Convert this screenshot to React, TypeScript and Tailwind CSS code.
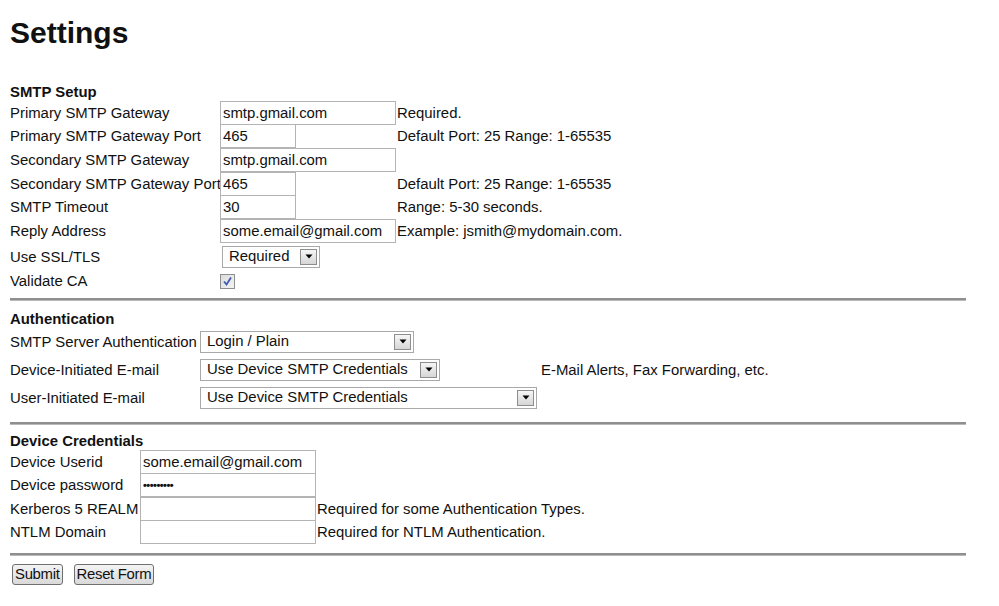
import React from "react";

const smtpRows = [
  { label: "Primary SMTP Gateway", value: "smtp.gmail.com", wide: true, hint: "Required." },
  { label: "Primary SMTP Gateway Port", value: "465", wide: false, hint: "Default Port: 25 Range: 1-65535" },
  { label: "Secondary SMTP Gateway", value: "smtp.gmail.com", wide: true, hint: "" },
  { label: "Secondary SMTP Gateway Port", value: "465", wide: false, hint: "Default Port: 25 Range: 1-65535" },
  { label: "SMTP Timeout", value: "30", wide: false, hint: "Range: 5-30 seconds." },
  { label: "Reply Address", value: "some.email@gmail.com", wide: true, hint: "Example: jsmith@mydomain.com." },
];

const credRows = [
  { label: "Device Userid", value: "some.email@gmail.com", hint: "" },
  { label: "Device password", value: "•••••••••", hint: "", secret: true },
  { label: "Kerberos 5 REALM", value: "", hint: "Required for some Authentication Types." },
  { label: "NTLM Domain", value: "", hint: "Required for NTLM Authentication." },
];

function TextBox({ value, width, secret }: { value: string; width: string; secret?: boolean }) {
  return (
    <input
      readOnly
      value={value}
      className={`${width} h-[24px] shrink-0 border border-[#b4b4b4] bg-white px-[2px] text-[#111] outline-none ${
        secret ? "text-[11px] font-bold tracking-[-0.5px]" : "text-[14.9px]"
      }`}
    />
  );
}

function Select({ value, width }: { value: string; width: string }) {
  return (
    <div className={`${width} h-[22px] shrink-0 flex items-center justify-between border border-[#a9a9a9] bg-white pl-[6px] pr-[2px]`}>
      <span className="text-[14.9px] leading-none text-[#111]">{value}</span>
      <span className="w-[17px] h-[16px] flex items-center justify-center border border-[#8d8d8d] bg-gradient-to-b from-[#f6f6f6] to-[#d6d6d6]">
        <svg width="8" height="5" viewBox="0 0 8 5">
          <path d="M0.5 0.5 L7.5 0.5 L4 4.5 Z" fill="#000" />
        </svg>
      </span>
    </div>
  );
}

function Rule() {
  return <div className="w-[956px] h-[3px] bg-[#8f8f8f] border-b border-[#b9b9b9]" />;
}

export default function App() {
  return (
    <div className="w-[999px] h-[606px] bg-white text-[#111] font-['Liberation_Sans',Arial,sans-serif] text-[14.9px] overflow-hidden">
      <div className="pl-[10px]">
        <h1 className="pt-[16px] h-[50px] text-[30px] font-bold leading-[34px]">Settings</h1>

        {/* SMTP setup */}
        <div className="mt-[33px] h-[18px] font-bold leading-[18px]">SMTP Setup</div>
        {smtpRows.map((r) => (
          <div key={r.label} className="h-[23.67px] flex items-center">
            <span className="w-[210px] shrink-0 whitespace-nowrap">{r.label}</span>
            <div className="w-[177px] shrink-0">
              <TextBox value={r.value} width={r.wide ? "w-[176px]" : "w-[76px]"} />
            </div>
            <span className="whitespace-nowrap">{r.hint}</span>
          </div>
        ))}
        <div className="h-[28px] flex items-center">
          <span className="w-[212px] shrink-0">Use SSL/TLS</span>
          <Select value="Required" width="w-[98px]" />
        </div>
        <div className="h-[21px] flex items-center">
          <span className="w-[210px] shrink-0">Validate CA</span>
          <span className="w-[15px] h-[15px] flex items-center justify-center border border-[#8e8f8f] bg-gradient-to-br from-[#dcdcdc] to-[#f4f4f4]">
            <svg width="11" height="11" viewBox="0 0 11 11">
              <path d="M2 5.5 L4.5 8.5 L9 1.5" fill="none" stroke="#3f5bb4" strokeWidth="1.8" />
            </svg>
          </span>
        </div>
        <div className="mt-[6px]">
          <Rule />
        </div>

        {/* Authentication */}
        <div className="mt-[9px] h-[18px] font-bold leading-[18px]">Authentication</div>
        <div className="h-[28px] flex items-center">
          <span className="w-[190px] shrink-0 whitespace-nowrap">SMTP Server Authentication</span>
          <Select value="Login / Plain" width="w-[214px]" />
        </div>
        <div className="h-[28px] flex items-center">
          <span className="w-[190px] shrink-0 whitespace-nowrap">Device-Initiated E-mail</span>
          <div className="w-[341px] shrink-0">
            <Select value="Use Device SMTP Credentials" width="w-[240px]" />
          </div>
          <span className="whitespace-nowrap">E-Mail Alerts, Fax Forwarding, etc.</span>
        </div>
        <div className="h-[28px] flex items-center">
          <span className="w-[190px] shrink-0 whitespace-nowrap">User-Initiated E-mail</span>
          <Select value="Use Device SMTP Credentials" width="w-[337px]" />
        </div>
        <div className="mt-[10px]">
          <Rule />
        </div>

        {/* Device credentials */}
        <div className="mt-[7px] h-[18px] font-bold leading-[18px]">Device Credentials</div>
        {credRows.map((r) => (
          <div key={r.label} className="h-[23.5px] flex items-center">
            <span className="w-[130px] shrink-0 whitespace-nowrap">{r.label}</span>
            <div className="w-[177px] shrink-0">
              <TextBox value={r.value} width="w-[176px]" secret={r.secret} />
            </div>
            <span className="whitespace-nowrap">{r.hint}</span>
          </div>
        ))}
        <div className="mt-[9px]">
          <Rule />
        </div>

        <div className="mt-[8px] flex gap-[11px] pl-[2px]">
          <button className="h-[21px] px-[2px] border border-[#6f6f6f] rounded-[3px] bg-gradient-to-b from-[#f4f4f4] to-[#d9d9d9] text-[14.9px] leading-none tracking-[-0.3px] text-[#111]">
            Submit
          </button>
          <button className="h-[21px] px-[2px] border border-[#6f6f6f] rounded-[3px] bg-gradient-to-b from-[#f4f4f4] to-[#d9d9d9] text-[14.9px] leading-none tracking-[-0.3px] text-[#111]">
            Reset Form
          </button>
        </div>
      </div>
    </div>
  );
}
